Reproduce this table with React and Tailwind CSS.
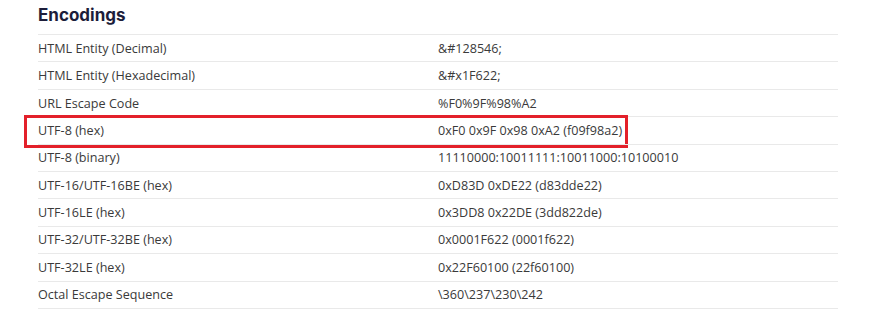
import React from "react";

const rows = [
  ["HTML Entity (Decimal)", "&#128546;"],
  ["HTML Entity (Hexadecimal)", "&#x1F622;"],
  ["URL Escape Code", "%F0%9F%98%A2"],
  ["UTF-8 (hex)", "0xF0 0x9F 0x98 0xA2 (f09f98a2)", true],
  ["UTF-8 (binary)", "11110000:10011111:10011000:10100010"],
  ["UTF-16/UTF-16BE (hex)", "0xD83D 0xDE22 (d83dde22)"],
  ["UTF-16LE (hex)", "0x3DD8 0x22DE (3dd822de)"],
  ["UTF-32/UTF-32BE (hex)", "0x0001F622 (0001f622)"],
  ["UTF-32LE (hex)", "0x22F60100 (22f60100)"],
  ["Octal Escape Sequence", "\\360\\237\\230\\242"],
];

export default function App() {
  return (
    <div className="w-[880px] h-[318px] bg-white overflow-hidden">
      <div className="ml-[38px] w-[800px]">
        <div className="h-[34px] pt-[3px]">
          <h2
            className="text-[17px] leading-[24px] font-bold text-[#1c1d3a]"
            style={{ fontFamily: "Inter, 'Noto Sans', sans-serif" }}
          >
            Encodings
          </h2>
        </div>
        <div
          className="border-b border-[#e9e9e9] text-[12.6px] text-[#3a3a3a]"
          style={{ fontFamily: "'Open Sans', 'Noto Sans', sans-serif" }}
        >
          {rows.map(([k, v, hl]) => (
            <div
              key={k}
              className="relative grid grid-cols-2 h-[27.4px] border-t border-[#e9e9e9] items-center pt-[2px]"
            >
              <div>{k}</div>
              <div>{v}</div>
              {hl && (
                <div className="absolute left-[-14px] top-[-2.5px] w-[604px] h-[33px] border-[3.5px] border-[#e3202a]" />
              )}
            </div>
          ))}
        </div>
      </div>
    </div>
  );
}
